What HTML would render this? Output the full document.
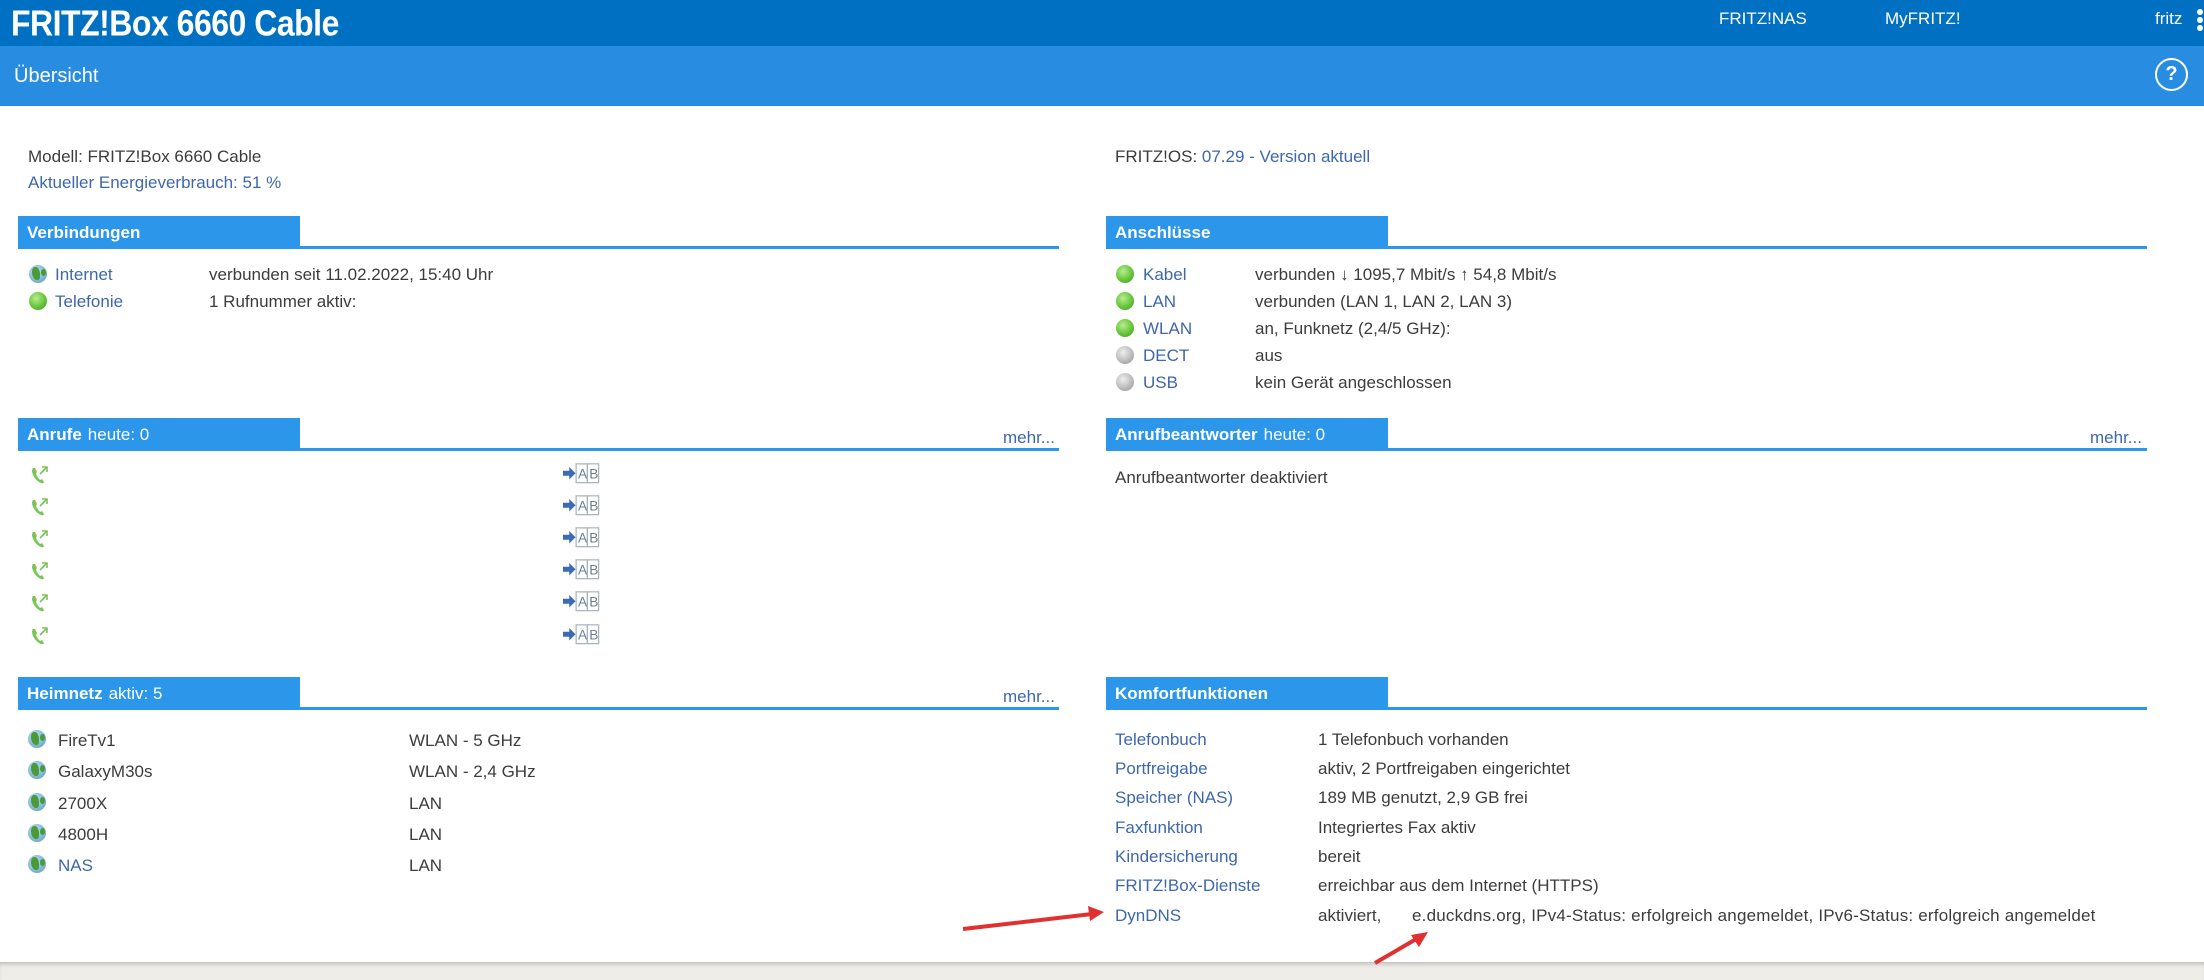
<!DOCTYPE html>
<html><head><meta charset="utf-8">
<style>
*{margin:0;padding:0;box-sizing:border-box}
body{width:2204px;height:980px;position:relative;overflow:hidden;background:#fff;font-family:"Liberation Sans",sans-serif;font-size:17px;color:#3c3c3c}
.a{position:absolute;white-space:nowrap;margin-top:3px}
.l{color:#3e67ad}
.top{position:absolute;left:0;top:0;width:2204px;height:46px;background:#0070c2}
.sub{position:absolute;left:0;top:46px;width:2204px;height:60px;background:#288de1}
.hb{position:absolute;height:32px;background:#2b96ea;color:#fff;font-weight:bold;font-size:17px;line-height:34px;padding-left:9px;width:282px}
.hb span{font-weight:normal;margin-left:6px}
.hl{position:absolute;height:3px;background:#2b96ea}
.dot{position:absolute;width:18px;height:18px;border-radius:50%}
.g{background:radial-gradient(circle at 40% 35%,#b8ee8e,#66c43a 55%,#3f9a22)}
.gr{background:radial-gradient(circle at 40% 35%,#eee,#bcbcbc 55%,#8f8f8f)}
.w{background:radial-gradient(circle at 40% 35%,#bfe0f5,#7fb6d8 60%,#5b93b8);overflow:hidden}
.w:after{content:"";position:absolute;left:3px;top:2px;width:8px;height:13px;background:#4a9a35;border-radius:40% 60% 30% 70%}
.w:before{content:"";position:absolute;right:1px;top:4px;width:5px;height:7px;background:#4a9a35;border-radius:50%}
</style></head><body>
<div class="top"></div>
<div class="a" style="left:11px;top:0px;font-size:32px;font-weight:bold;color:#fff;letter-spacing:-0.5px;transform:scaleY(1.12);transform-origin:top left">FRITZ!Box 6660 Cable</div>
<div class="a" style="left:1719px;top:6px;color:#fff;font-size:17px">FRITZ!NAS</div>
<div class="a" style="left:1885px;top:6px;color:#fff;font-size:17px">MyFRITZ!</div>
<div class="a" style="left:2155px;top:6px;color:#fff;font-size:17px">fritz</div>
<div class="a" style="left:2197px;top:6px;width:6px;height:6px;border-radius:50%;background:#fff"></div>
<div class="a" style="left:2197px;top:14px;width:6px;height:6px;border-radius:50%;background:#fff"></div>
<div class="a" style="left:2197px;top:22px;width:6px;height:6px;border-radius:50%;background:#fff"></div>
<div class="sub"></div>
<div class="a" style="left:14px;top:62px;color:#fff;font-size:20px">Übersicht</div>
<div class="a" style="left:2155px;top:55px;width:33px;height:33px;border:2.5px solid #fff;border-radius:50%;color:#fff;font-weight:bold;font-size:20px;text-align:center;line-height:28px">?</div>

<div class="a" style="left:28px;top:144px">Modell: FRITZ!Box 6660 Cable</div>
<div class="a l" style="left:28px;top:170px">Aktueller Energieverbrauch: 51 %</div>
<div class="a" style="left:1115px;top:144px">FRITZ!OS: <span class="l">07.29 - Version aktuell</span></div>

<div class="hb" style="left:18px;top:216px">Verbindungen</div>
<div class="hl" style="left:18px;top:246px;width:1041px"></div>
<div class="dot w" style="left:29px;top:265px"></div>
<div class="a l" style="left:55px;top:262px">Internet</div>
<div class="a" style="left:209px;top:262px">verbunden seit 11.02.2022, 15:40 Uhr</div>
<div class="dot g" style="left:29px;top:292px"></div>
<div class="a l" style="left:55px;top:289px">Telefonie</div>
<div class="a" style="left:209px;top:289px">1 Rufnummer aktiv: </div>

<div class="hb" style="left:1106px;top:216px">Anschlüsse</div>
<div class="hl" style="left:1106px;top:246px;width:1041px"></div>
<div class="dot g" style="left:1116px;top:265px"></div><div class="a l" style="left:1143px;top:262px">Kabel</div><div class="a" style="left:1255px;top:262px">verbunden ↓ 1095,7 Mbit/s ↑ 54,8 Mbit/s</div>
<div class="dot g" style="left:1116px;top:292px"></div><div class="a l" style="left:1143px;top:289px">LAN</div><div class="a" style="left:1255px;top:289px">verbunden (LAN 1, LAN 2, LAN 3)</div>
<div class="dot g" style="left:1116px;top:319px"></div><div class="a l" style="left:1143px;top:316px">WLAN</div><div class="a" style="left:1255px;top:316px">an, Funknetz (2,4/5 GHz):</div>
<div class="dot gr" style="left:1116px;top:346px"></div><div class="a l" style="left:1143px;top:343px">DECT</div><div class="a" style="left:1255px;top:343px">aus</div>
<div class="dot gr" style="left:1116px;top:373px"></div><div class="a l" style="left:1143px;top:370px">USB</div><div class="a" style="left:1255px;top:370px">kein Gerät angeschlossen</div>

<div class="hb" style="left:18px;top:418px">Anrufe<span>heute: 0</span></div>
<div class="hl" style="left:18px;top:448px;width:1041px"></div>
<div class="a l" style="left:1003px;top:425px">mehr...</div>

<div class="hb" style="left:1106px;top:418px">Anrufbeantworter<span>heute: 0</span></div>
<div class="hl" style="left:1106px;top:448px;width:1041px"></div>
<div class="a l" style="left:2090px;top:425px">mehr...</div>
<div class="a" style="left:1115px;top:465px">Anrufbeantworter deaktiviert</div>

<div class="hb" style="left:18px;top:677px">Heimnetz<span>aktiv: 5</span></div>
<div class="hl" style="left:18px;top:707px;width:1041px"></div>
<div class="a l" style="left:1003px;top:684px">mehr...</div>
<div class="dot w" style="left:28px;top:730px"></div><div class="a" style="left:58px;top:728px">FireTv1</div><div class="a" style="left:409px;top:728px">WLAN - 5 GHz</div>
<div class="dot w" style="left:28px;top:761px"></div><div class="a" style="left:58px;top:759px">GalaxyM30s</div><div class="a" style="left:409px;top:759px">WLAN - 2,4 GHz</div>
<div class="dot w" style="left:28px;top:793px"></div><div class="a" style="left:58px;top:791px">2700X</div><div class="a" style="left:409px;top:791px">LAN</div>
<div class="dot w" style="left:28px;top:824px"></div><div class="a" style="left:58px;top:822px">4800H</div><div class="a" style="left:409px;top:822px">LAN</div>
<div class="dot w" style="left:28px;top:855px"></div><div class="a l" style="left:58px;top:853px">NAS</div><div class="a" style="left:409px;top:853px">LAN</div>

<div class="hb" style="left:1106px;top:677px">Komfortfunktionen</div>
<div class="hl" style="left:1106px;top:707px;width:1041px"></div>
<div class="a l" style="left:1115px;top:727px">Telefonbuch</div><div class="a" style="left:1318px;top:727px">1 Telefonbuch vorhanden</div>
<div class="a l" style="left:1115px;top:756px">Portfreigabe</div><div class="a" style="left:1318px;top:756px">aktiv, 2 Portfreigaben eingerichtet</div>
<div class="a l" style="left:1115px;top:785px">Speicher (NAS)</div><div class="a" style="left:1318px;top:785px">189 MB genutzt, 2,9 GB frei</div>
<div class="a l" style="left:1115px;top:815px">Faxfunktion</div><div class="a" style="left:1318px;top:815px">Integriertes Fax aktiv</div>
<div class="a l" style="left:1115px;top:844px">Kindersicherung</div><div class="a" style="left:1318px;top:844px">bereit</div>
<div class="a l" style="left:1115px;top:873px">FRITZ!Box-Dienste</div><div class="a" style="left:1318px;top:873px">erreichbar aus dem Internet (HTTPS)</div>
<div class="a l" style="left:1115px;top:903px">DynDNS</div><div class="a" style="left:1318px;top:903px">aktiviert,</div><div class="a" style="left:1412px;top:903px;letter-spacing:0.2px">e.duckdns.org, IPv4-Status: erfolgreich angemeldet, IPv6-Status: erfolgreich angemeldet</div>

<div style="position:absolute;left:0;top:962px;width:2204px;height:18px;background:#efede8;box-shadow:inset 0 4px 4px -2px #bbb"></div>

<svg style="position:absolute;left:0;top:0" width="2204" height="980">
<line x1="963" y1="929" x2="1092" y2="914" stroke="#e03030" stroke-width="4"/>
<polygon points="1104,912 1088,906 1090,921" fill="#e03030"/>
<line x1="1375" y1="963" x2="1418" y2="938" stroke="#e03030" stroke-width="4"/>
<polygon points="1428,932 1411,935 1419,947" fill="#e03030"/>
</svg>
<svg style="position:absolute;left:0;top:0" width="1100" height="660">
<defs>
<g id="call">
<path d="M3 3 Q1 5 3 10 Q6 16 11 18 Q13 19 14 17 L12 14 L10 15 Q7 12 6 9 L7 7 L5 3 Z" fill="#7cc35a"/>
<path d="M10 9 L17 2 M12 2 L17 2 L17 7" stroke="#7cc35a" stroke-width="1.6" fill="none"/>
</g>
<g id="ab" transform="scale(1.25)">
<path d="M0 7 H5 V4 L10 9 L5 14 V11 H0 Z" fill="#3d6ab4"/>
<rect x="10.5" y="1.5" width="9" height="15" fill="#fff" stroke="#a8b4c0"/>
<rect x="19.5" y="1.5" width="9" height="15" fill="#fff" stroke="#a8b4c0"/>
<text x="12" y="13" font-family="Liberation Sans" font-size="11" fill="#6e8094">A</text>
<text x="21" y="13" font-family="Liberation Sans" font-size="11" fill="#6e8094">B</text>
</g>
</defs>
<use href="#call" x="30" y="465"/><use href="#ab" x="563" y="462"/>
<use href="#call" x="30" y="497"/><use href="#ab" x="563" y="494"/>
<use href="#call" x="30" y="529"/><use href="#ab" x="563" y="526"/>
<use href="#call" x="30" y="561"/><use href="#ab" x="563" y="558"/>
<use href="#call" x="30" y="593"/><use href="#ab" x="563" y="590"/>
<use href="#call" x="30" y="626"/><use href="#ab" x="563" y="623"/>
</svg>
</body></html>
